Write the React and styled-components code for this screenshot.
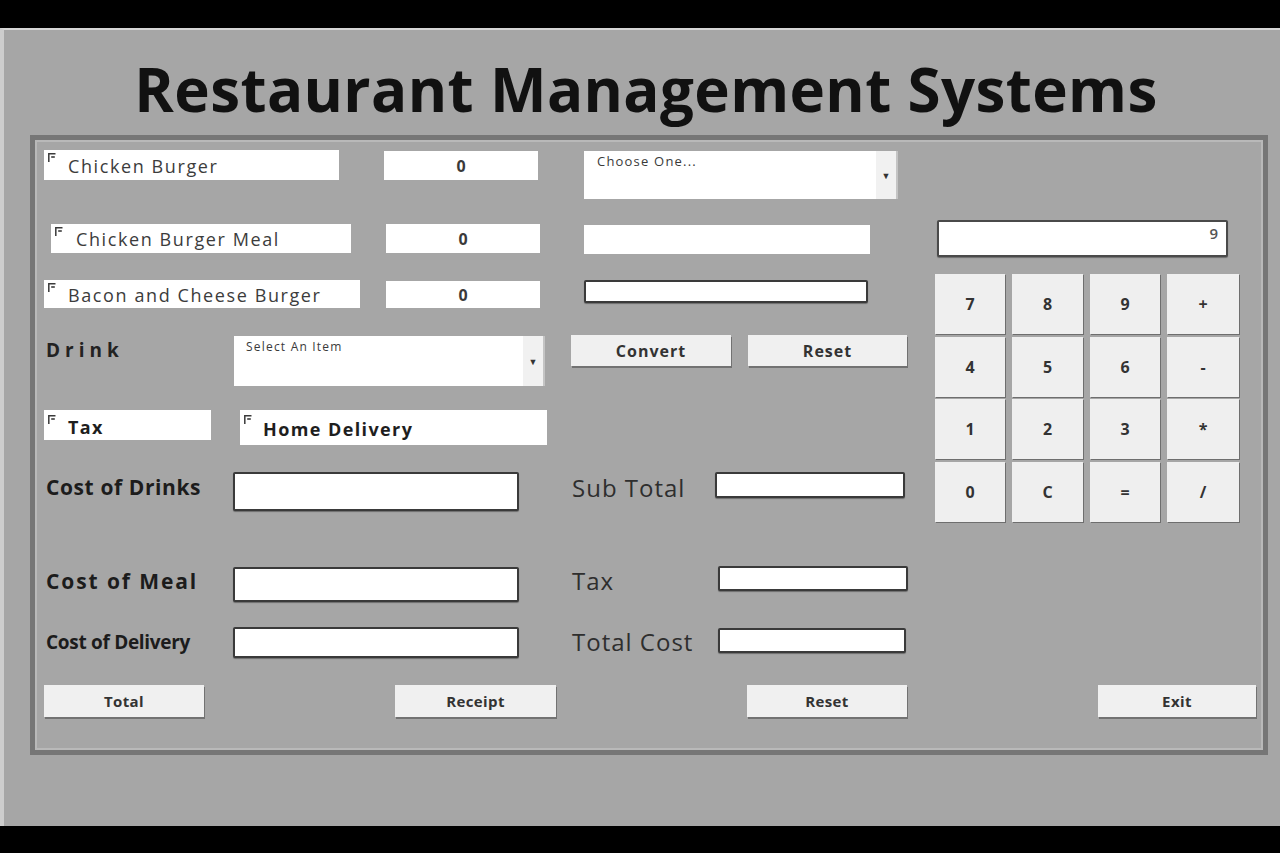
import React from 'react';
import styled, { createGlobalStyle } from 'styled-components';

const Global = createGlobalStyle`
  html, body { margin: 0; padding: 0; background: #000; }
  body { font-family: "Open Sans", "Liberation Sans", sans-serif; }
  #root { width: 1280px; height: 853px; }
`;

const Screen = styled.div`
  width: 1280px;
  height: 853px;
  display: flex;
  flex-direction: column;
  background: #000;
  overflow: hidden;
`;

const Band = styled.div`
  flex: none;
  height: ${p => p.$h}px;
  background: #000;
`;

const Window = styled.div`
  flex: none;
  height: 798px;
  box-sizing: border-box;
  background: #a6a6a6;
  border-top: 2px solid #d6d6d6;
  border-left: 4px solid #cdcdcd;
  display: flex;
  flex-direction: column;
`;

const Title = styled.h1`
  margin: 18px 0 5px;
  padding-left: 8px;
  text-align: center;
  font-family: "Open Sans", "Liberation Sans", sans-serif;
  font-weight: 700;
  font-size: 60px;
  line-height: 82px;
  letter-spacing: 0.4px;
  color: #111;
`;

const Panel = styled.div`
  flex: none;
  margin-left: 26px;
  width: 1238px;
  height: 620px;
  box-sizing: border-box;
  border: 5px solid #767676;
  box-shadow: inset 0 0 0 2px #b9b9b9;
  padding: 10px 7px 0 9px;
  display: flex;
  flex-direction: column;
`;

const Top = styled.div`
  display: flex;
  align-items: flex-start;
  height: 535px;
  flex: none;
`;

const Form = styled.div`
  width: 864px;
  flex: none;
  display: flex;
  flex-direction: column;
`;

const Row = styled.div`
  display: flex;
  align-items: flex-start;
  height: ${p => p.$h}px;
  flex: none;
`;

const CheckField = styled.label`
  flex: none;
  box-sizing: border-box;
  margin-left: ${p => p.$ml || 0}px;
  margin-top: ${p => p.$mt || 0}px;
  width: ${p => p.$w}px;
  height: ${p => p.$h}px;
  background: #fff;
  display: flex;
  align-items: center;
  padding-left: 4px;
  padding-top: ${p => (p.$bold ? 3 : 1)}px;
  font-size: 18px;
  letter-spacing: ${p => (p.$bold ? '1.4px' : '1.6px')};
  font-weight: ${p => (p.$bold ? 700 : 400)};
  color: ${p => (p.$bold ? '#1e1e1e' : '#3c3c3c')};
  white-space: nowrap;
`;

const CheckIcon = styled.svg`
  flex: none;
  align-self: flex-start;
  margin-top: 2px;
  margin-right: ${p => p.$gap}px;
  width: 9px;
  height: 9px;
`;

const Qty = styled.input`
  flex: none;
  box-sizing: border-box;
  margin-left: ${p => p.$ml || 0}px;
  margin-top: ${p => p.$mt || 0}px;
  width: ${p => p.$w}px;
  height: ${p => p.$h}px;
  border: none;
  outline: none;
  background: #fff;
  padding: 0;
  text-align: center;
  font-family: "Open Sans", "Liberation Sans", sans-serif;
  font-size: 16px;
  font-weight: 700;
  color: #3a3a3a;
`;

const TextBox = styled.input`
  flex: none;
  box-sizing: border-box;
  margin-left: ${p => p.$ml || 0}px;
  margin-top: ${p => p.$mt || 0}px;
  width: ${p => p.$w}px;
  height: ${p => p.$h}px;
  background: #fff;
  outline: none;
  padding: 0 6px;
  font-family: "Open Sans", "Liberation Sans", sans-serif;
  font-size: 15px;
  border: ${p => (p.$framed ? '2px solid #3a3a3a' : 'none')};
  border-radius: ${p => (p.$framed ? '2px' : '0')};
  box-shadow: ${p => (p.$framed ? '0 1px 1px rgba(0,0,0,0.35)' : 'none')};
`;

const Combo = styled.div`
  flex: none;
  box-sizing: border-box;
  margin-left: ${p => p.$ml || 0}px;
  margin-top: ${p => p.$mt || 0}px;
  width: ${p => p.$w}px;
  height: ${p => p.$h}px;
  background: #fff;
  display: flex;
`;

const ComboText = styled.div`
  flex: 1;
  padding: ${p => p.$pt}px 0 0 ${p => p.$pl}px;
  font-size: ${p => p.$fs}px;
  line-height: 16px;
  letter-spacing: 1.2px;
  color: #3a3a3a;
  white-space: nowrap;
`;

const ComboArrow = styled.div`
  flex: none;
  width: 20px;
  background: #f1f1f1;
  border-right: 2px solid #c4c4c4;
  display: flex;
  align-items: center;
  justify-content: center;
  font-size: 9px;
  color: #333;
`;

const Label = styled.div`
  flex: none;
  margin-left: ${p => p.$ml || 0}px;
  width: ${p => p.$w}px;
  line-height: ${p => p.$lh || 30}px;
  font-size: ${p => p.$fs || 21}px;
  font-weight: 700;
  letter-spacing: ${p => (p.$ls !== undefined ? p.$ls : 0.6)}px;
  color: #1c1c1c;
  white-space: nowrap;
`;

const DrinkLabel = styled(Label)`
  font-size: 19px;
  letter-spacing: 5px;
  color: #222;
`;

const SumLabel = styled.div`
  flex: none;
  margin-left: ${p => p.$ml || 0}px;
  width: ${p => p.$w}px;
  line-height: ${p => p.$lh || 30}px;
  font-size: 24px;
  font-weight: 400;
  letter-spacing: 1px;
  color: #2e2e2e;
  white-space: nowrap;
`;

const Btn = styled.button`
  flex: none;
  box-sizing: border-box;
  margin-left: ${p => p.$ml || 0}px;
  width: ${p => p.$w}px;
  height: ${p => p.$h || 32}px;
  border: none;
  padding: 0;
  background: #f0f0f0;
  box-shadow: 1px 2px 0 #727272;
  font-family: "Open Sans", "Liberation Sans", sans-serif;
  font-size: ${p => p.$fs || 15}px;
  font-weight: 700;
  letter-spacing: ${p => (p.$fs ? 1 : 0.4)}px;
  color: #333;
`;

const Calc = styled.div`
  margin-left: 27px;
  width: 305px;
  flex: none;
  display: flex;
  flex-direction: column;
  padding-top: 70px;
`;

const Display = styled.div`
  margin-left: 2px;
  width: 291px;
  height: 37px;
  box-sizing: border-box;
  background: #fff;
  border: 2px solid #4a4a4a;
  border-radius: 2px;
  box-shadow: 0 1px 1px rgba(0,0,0,0.35);
  text-align: right;
  padding: 0 8px;
  font-size: 15px;
  line-height: 22px;
  font-weight: 600;
  color: #555;
`;

const Keys = styled.div`
  margin-top: 17px;
  display: grid;
  grid-template-columns: 70px 71px 70px 72px;
  grid-auto-rows: 60px;
  column-gap: 7px;
  row-gap: 2.7px;
`;

const Key = styled.button`
  border: none;
  padding: 0;
  background: #efefef;
  box-shadow: 1px 1px 0 #6e6e6e;
  font-family: "Open Sans", "Liberation Sans", sans-serif;
  font-size: 16px;
  font-weight: 700;
  color: #333;
`;

const Footer = styled.div`
  display: flex;
  justify-content: space-between;
  align-items: flex-start;
`;

const Tick = ({ gap }) => (
  <CheckIcon $gap={gap} viewBox="0 0 9 9">
    <path d="M0.8 9 V0.8 H7.5" fill="none" stroke="#3a3a3a" strokeWidth="1.5" />
    <path d="M3.2 4 H6.8" fill="none" stroke="#3a3a3a" strokeWidth="1.6" />
  </CheckIcon>
);

const keys = ['7', '8', '9', '+', '4', '5', '6', '-', '1', '2', '3', '*', '0', 'C', '=', '/'];

export default function App() {
  return (
    <>
      <Global />
      <Screen>
        <Band $h={28} />
        <Window>
          <Title>Restaurant Management Systems</Title>
          <Panel>
            <Top>
              <Form>
                <Row $h={74}>
                  <CheckField $w={295} $h={30}><Tick gap={11} />Chicken Burger</CheckField>
                  <Qty $ml={45} $mt={1} $w={154} $h={29} readOnly value="0" />
                  <Combo $ml={46} $mt={1} $w={314} $h={48}>
                    <ComboText $pt={2} $pl={13} $fs={13}>Choose One...</ComboText>
                    <ComboArrow>▼</ComboArrow>
                  </Combo>
                </Row>
                <Row $h={56}>
                  <CheckField $ml={7} $w={300} $h={29}><Tick gap={12} />Chicken Burger Meal</CheckField>
                  <Qty $ml={35} $w={154} $h={29} readOnly value="0" />
                  <TextBox $ml={44} $mt={1} $w={286} $h={29} readOnly />
                </Row>
                <Row $h={55}>
                  <CheckField $w={316} $h={28}><Tick gap={11} />Bacon and Cheese Burger</CheckField>
                  <Qty $ml={26} $mt={1} $w={154} $h={27} readOnly value="0" />
                  <TextBox $ml={44} $w={284} $h={23} $framed readOnly />
                </Row>
                <Row $h={75}>
                  <DrinkLabel $ml={2} $w={188}>Drink</DrinkLabel>
                  <Combo $mt={1} $w={311} $h={50}>
                    <ComboText $pt={3} $pl={12} $fs={12}>Select An Item</ComboText>
                    <ComboArrow>▼</ComboArrow>
                  </Combo>
                  <Btn $ml={26} $w={160} $h={31} $fs={16}>Convert</Btn>
                  <Btn $ml={17} $w={159} $h={31} $fs={16}>Reset</Btn>
                </Row>
                <Row $h={62}>
                  <CheckField $w={167} $h={30} $bold><Tick gap={11} />Tax</CheckField>
                  <CheckField $ml={29} $w={307} $h={35} $bold><Tick gap={10} />Home Delivery</CheckField>
                </Row>
                <Row $h={94}>
                  <Label $ml={2} $w={187}>Cost of Drinks</Label>
                  <TextBox $w={286} $h={39} $framed readOnly />
                  <SumLabel $ml={53} $w={143} $lh={32}>Sub Total</SumLabel>
                  <TextBox $w={190} $h={26} $framed readOnly />
                </Row>
                <Row $h={61}>
                  <Label $ml={2} $w={187} $ls={1.9}>Cost of Meal</Label>
                  <TextBox $mt={1} $w={286} $h={35} $framed readOnly />
                  <SumLabel $ml={53} $w={146}>Tax</SumLabel>
                  <TextBox $w={190} $h={25} $framed readOnly />
                </Row>
                <Row $h={58}>
                  <Label $ml={2} $w={187} $fs={19} $ls={-0.3}>Cost of Delivery</Label>
                  <TextBox $w={286} $h={31} $framed readOnly />
                  <SumLabel $ml={53} $w={146}>Total Cost</SumLabel>
                  <TextBox $mt={1} $w={188} $h={25} $framed readOnly />
                </Row>
              </Form>
              <Calc>
                <Display>9</Display>
                <Keys>
                  {keys.map(k => (
                    <Key key={k}>{k}</Key>
                  ))}
                </Keys>
              </Calc>
            </Top>
            <Footer>
              <Btn $w={160}>Total</Btn>
              <Btn $w={161}>Receipt</Btn>
              <Btn $w={160}>Reset</Btn>
              <Btn $w={158}>Exit</Btn>
            </Footer>
          </Panel>
        </Window>
        <Band $h={27} />
      </Screen>
    </>
  );
}
